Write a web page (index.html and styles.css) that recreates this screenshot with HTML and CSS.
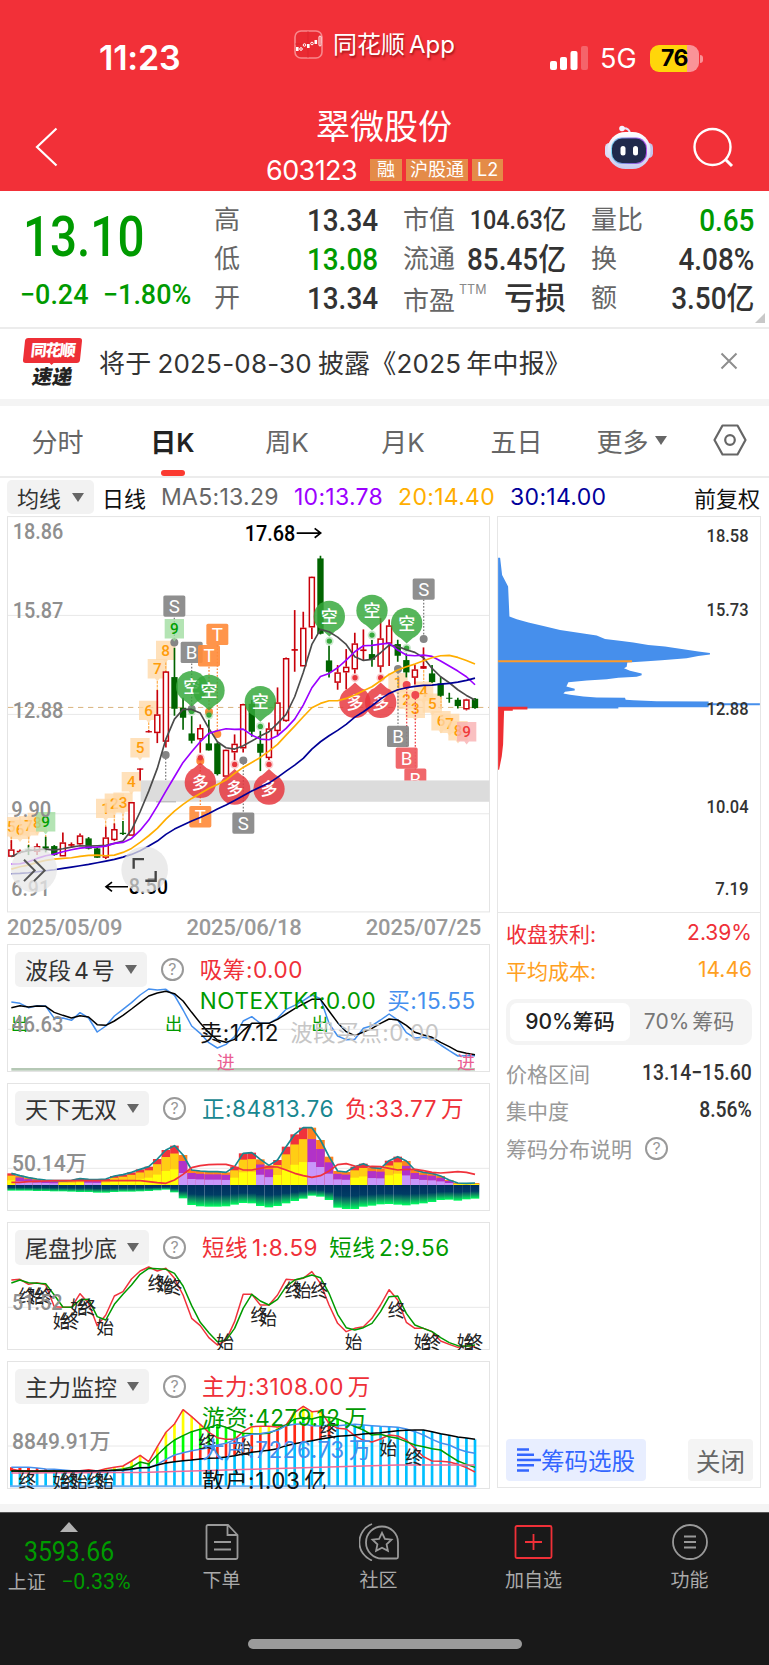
FILE: index.html
```html
<!DOCTYPE html>
<html lang="zh-CN">

<head>
    <meta charset="UTF-8">
    <meta name="viewport" content="width=device-width, initial-scale=1.0">
    <title>翠微股份 603123</title>
    <link rel="stylesheet" href="styles.css">
</head>

<body>
    <!-- 顶部 -->
    <header class="header">
        <div class="status">
            <span class="time">11:23</span>
            <div class="brand">
                <svg width="29" height="29" viewBox="0 0 29 29">
                    <rect x="1" y="1" width="27" height="27" rx="6" fill="#ea2a32" stroke="#f8888c" stroke-width="1.6" />
                    <path d="M1 14h27M14 1v27" stroke="#d82029" stroke-width=".6" />
                    <g fill="#fff">
                        <rect x="2" y="17" width="2.6" height="4" />
                        <rect x="13" y="14" width="2.6" height="4" />
                        <rect x="20.5" y="10" width="2.6" height="4" />
                    </g>
                    <g fill="none" stroke="#fff">
                        <circle cx="7" cy="19" r="1.3" />
                        <circle cx="10.5" cy="15" r="1.3" />
                        <circle cx="18" cy="13.5" r="1.3" />
                        <rect x="25" y="6" width="2" height="10" rx="1" />
                    </g>
                </svg>
                <span>同花顺<i>App</i></span>
            </div>
            <div class="signal">
                <svg width="39" height="26" viewBox="0 0 39 26" fill="#fff">
                    <rect x="0" y="16" width="7" height="9" rx="2" />
                    <rect x="10" y="12" width="7" height="13" rx="2" />
                    <rect x="20.5" y="6" width="7" height="19" rx="2" />
                    <rect x="31" y="1" width="7" height="24" rx="2" opacity=".25" />
                </svg>
                <span class="net">5G</span>
                <span class="battery">76</span>
            </div>
        </div>
        <div class="title-bar">
            <svg class="back" width="24" height="40" viewBox="0 0 24 40">
                <path d="M21.500 1.500L2 20l19.500 18.500" fill="none" stroke="#fff" stroke-width="2.200" />
            </svg>
            <div class="name">
                <h1>翠微股份</h1>
                <p><b>603123</b><span>融</span><span>沪股通</span><span>L2</span></p>
            </div>
            <div class="tools">
                <svg width="48" height="44" viewBox="0 0 48 44">
                    <defs>
                        <linearGradient id="head" x1="0" y1="0" x2="0" y2="1">
                            <stop offset="0" stop-color="#fff" />
                            <stop offset="1" stop-color="#c9cbf0" />
                        </linearGradient>
                        <linearGradient id="face" x1="0" y1="0" x2="1" y2="0">
                            <stop offset="0" stop-color="#7fd8f4" />
                            <stop offset=".5" stop-color="#7c6cd8" />
                            <stop offset="1" stop-color="#b04fe8" />
                        </linearGradient>
                    </defs>
                    <path d="M17 3.500q7-1 8 5" fill="none" stroke="#e6e6fa" stroke-width="2" />
                    <circle cx="17" cy="3.500" r="2.800" fill="#f4f2ff" />
                    <rect x="0" y="18" width="9" height="15" rx="4.500" fill="#dcdcf6" />
                    <rect x="39" y="18" width="9" height="15" rx="4.500" fill="#c4c4ea" />
                    <rect x="2.500" y="7" width="43" height="37" rx="18" fill="url(#head)" />
                    <rect x="6" y="12.500" width="36" height="26.500" rx="11" fill="url(#face)" />
                    <rect x="7" y="13.500" width="34" height="24.500" rx="10" fill="#202a4c" />
                    <rect x="15.500" y="21" width="5" height="9.500" rx="2.500" fill="#fff" />
                    <rect x="28" y="21" width="5" height="9.500" rx="2.500" fill="#fff" />
                </svg>
                <svg width="42" height="42" viewBox="0 0 42 42" fill="none" stroke="#fff" stroke-width="2.400">
                    <circle cx="19.500" cy="20" r="18" />
                    <path d="M32 32l7 7" stroke-width="3" />
                </svg>
            </div>
        </div>
    </header>

    <!-- 报价 -->
    <section class="quote">
        <div class="price">
            <p class="now"><span class="din">13.10</span></p>
            <p class="diff"><span class="din">−0.24</span><span class="din">−1.80%</span></p>
        </div>
        <dl class="col">
            <div><dt>高</dt><dd><span class="din">13.34</span></dd></div>
            <div><dt>低</dt><dd class="green"><span class="din">13.08</span></dd></div>
            <div><dt>开</dt><dd><span class="din">13.34</span></dd></div>
        </dl>
        <dl class="col">
            <div><dt>市值</dt><dd class="small"><span class="din">104.63亿</span></dd></div>
            <div><dt>流通</dt><dd><span class="din">85.45亿</span></dd></div>
            <div><dt class="pe">市盈<sup>TTM</sup></dt><dd class="cn">亏损</dd></div>
        </dl>
        <dl class="col">
            <div><dt>量比</dt><dd class="green"><span class="din">0.65</span></dd></div>
            <div><dt>换</dt><dd><span class="din">4.08%</span></dd></div>
            <div><dt>额</dt><dd><span class="din">3.50亿</span></dd></div>
        </dl>
        <i class="corner"></i>
    </section>

    <section class="notice">
        <div class="logo">
            <b>同花顺</b>
            <em>速递</em>
        </div>
        <p>将于<i>2025-08-30</i>披露《2025<u>年中报》</u></p>
        <svg width="18" height="18" viewBox="0 0 18 18" stroke="#8e8e8e" stroke-width="2"><path d="M1.500 1.500l15 15M16.500 1.500l-15 15" /></svg>
    </section>

    <!-- 周期切换 -->
    <nav class="tabs">
        <span>分时</span>
        <span class="active">日K</span>
        <span>周K</span>
        <span>月K</span>
        <span>五日</span>
        <span>更多<i class="arrow"></i></span>
        <span>
            <svg width="34" height="32" viewBox="0 0 34 32" fill="none" stroke="#666" stroke-width="2.200">
                <path d="M9.500 1.500h15L32.500 16l-8 14.500h-15L1.500 16z" stroke-linejoin="round" />
                <circle cx="17" cy="16" r="4.800" />
            </svg>
        </span>
    </nav>

    <div class="ma">
        <span class="select">均线<i class="arrow"></i></span>
        <span class="day">日线</span>
        <span class="ma5">MA5:13.29</span>
        <span class="ma10">10:13.78</span>
        <span class="ma20">20:14.40</span>
        <span class="ma30">30:14.00</span>
        <span class="right">前复权</span>
    </div>

    <main class="charts">
        <div class="left">
            <svg class="price-chart" id="priceChart" viewBox="21 3 1449 1189"></svg>
            <p class="dates"><span>2025/05/09</span><span>2025/06/18</span><span>2025/07/25</span></p>

            <div class="panel">
                <svg id="waveChart" viewBox="21 12 1449 384"></svg>
                <div class="legend wave">
                    <span class="select">波段 4 号<i class="arrow"></i></span>
                    <span class="help">?</span>
                    <div class="values">
                        <span class="red">吸筹:0.00</span><br>
                        <span class="green">NOTEXTK1:0.00</span><span class="blue">买:15.55</span><br>
                        <span class="black">卖:17.12</span><span class="grey">波段买点:0.00</span>
                    </div>
                </div>
            </div>
            <div class="panel">
                <svg id="flowChart" viewBox="21 429 1449 384"></svg>
                <div class="legend">
                    <span class="select">天下无双<i class="arrow"></i></span>
                    <span class="help">?</span>
                    <div class="values">
                        <span class="teal">正:84813.76</span><span class="red">负:33.77 万</span>
                    </div>
                </div>
            </div>
            <div class="panel">
                <svg id="shortChart" viewBox="21 21 1449 384"></svg>
                <div class="legend">
                    <span class="select">尾盘抄底<i class="arrow"></i></span>
                    <span class="help">?</span>
                    <div class="values">
                        <span class="red">短线 1:8.59</span><span class="green">短线 2:9.56</span>
                    </div>
                </div>
            </div>
            <div class="panel">
                <svg id="mainChart" viewBox="21 438 1449 384"></svg>
                <div class="legend">
                    <span class="select">主力监控<i class="arrow"></i></span>
                    <span class="help">?</span>
                    <div class="values">
                        <span class="red">主力:3108.00 万</span><br>
                        <span class="green">游资:4279.12 万</span><br>
                        <span class="blue">大户:7226.73 万</span><br>
                        <span class="black">散户:1.03 亿</span>
                    </div>
                </div>
            </div>
        </div>

        <!-- 筹码分布 -->
        <aside class="chips">
            <svg id="chipChart" viewBox="24 6 786 1186"></svg>
            <div class="info">
                <p class="red"><span>收盘获利:</span><span>2.39%</span></p>
                <p class="orange"><span>平均成本:</span><span>14.46</span></p>
                <div class="switch"><b>90%筹码</b><span>70% 筹码</span></div>
                <p><span>价格区间</span><b class="din">13.14−15.60</b></p>
                <p><span>集中度</span><b class="din">8.56%</b></p>
                <p class="explain"><span>筹码分布说明</span><span class="help">?</span></p>
            </div>
            <div class="buttons">
                <span class="pick">
                    <svg width="24" height="24" viewBox="0 0 24 24" stroke="#3366ff" stroke-width="2.600"><path d="M0 1.500h12M0 6.700h17M0 12h24M0 17.300h17M0 22.500h12" /></svg>筹码选股
                </span>
                <span class="close">关闭</span>
            </div>
        </aside>
    </main>

    <!-- 底部 -->
    <footer class="footer">
        <div class="bar">
            <div class="index">
                <i></i>
                <b><span class="din">3593.66</span></b>
                <p>上证<span class="din">−0.33%</span></p>
            </div>
            <div class="item">
                <svg width="34" height="37" viewBox="0 0 34 37">
                    <path d="M3 1.500h20l9.500 10V34q0 1.500-1.500 1.500H3Q1.500 35.500 1.500 34V3Q1.500 1.500 3 1.500zM22.500 1.500V11.500h10M9 18.500h17M9 26h17" />
                </svg>
                <span>下单</span>
            </div>
            <div class="item">
                <svg width="40" height="38" viewBox="0 0 40 38">
                    <path d="M23 3.500A15.500 15.500 0 0 0 23 35.500H37.500q1.500 0 1.500-1.500V19.500A16 16 0 0 0 23 3.500zM13 1A19.500 19.500 0 0 0 13 37.500M23 9.800l2.900 6.100 6.600.8-4.900 4.600 1.300 6.600L23 24.700l-5.900 3.200 1.300-6.600-4.900-4.600 6.600-.8z" />
                </svg>
                <span>社区</span>
            </div>
            <div class="item">
                <svg class="add" width="39" height="35" viewBox="0 0 39 35">
                    <path d="M3 1.500h33q1.500 0 1.500 1.500v29q0 1.500-1.500 1.500H3Q1.500 33.500 1.500 32V3Q1.500 1.500 3 1.500zM19.500 9.500v16M11 17.500h17" />
                </svg>
                <span>加自选</span>
            </div>
            <div class="item">
                <svg width="36" height="36" viewBox="0 0 36 36">
                    <circle cx="18" cy="18" r="17" />
                    <path d="M12 12.500h12M12 18h12M12 23.500h12" />
                </svg>
                <span>功能</span>
            </div>
        </div>
        <i class="home"></i>
    </footer>

    <script src="charts.js"></script>
</body>

</html>
```
FILE: styles.css
```css
* {
    padding: 0;
    margin: 0;
    box-sizing: border-box;
}

body {
    width: 769px;
    background: #fff;
    font-family: Inter, "Noto Sans CJK SC", sans-serif;
    color: #333;
}

i, em, u {
    font-style: normal;
    text-decoration: none;
}

svg {
    display: block;
    flex: none;
}

svg text {
    font-family: Roboto, "Noto Sans CJK SC", sans-serif;
}

.din {
    display: inline-block;
    font-family: Roboto, "Noto Sans CJK SC", sans-serif;
    transform: scaleX(.9);
    transform-origin: right center;
}

.red { color: #ef3038; }
.green { color: #009a00; }
.blue { color: #448fee; }
.black { color: #111; }
.grey { color: #c6c6c6; }
.teal { color: #188790; }
.orange { color: #ffa01e; }

/* 顶部 */
.header {
    height: 191px;
    background: #f23038;
    color: #fff;
}

.status {
    height: 100px;
    padding: 0 65px 0 99px;
    display: grid;
    grid-template-columns: 195px 1fr 154px;
}

.time {
    padding-top: 38px;
    font-size: 34px;
    line-height: 40px;
    font-weight: 600;
    letter-spacing: -.2px;
}

.brand {
    display: flex;
    gap: 10px;
    height: 29px;
    margin-top: 30px;
    align-items: center;
    font-size: 24px;
    line-height: 29px;
    text-shadow: 1px 2px 2px rgba(90, 0, 0, .5);
    white-space: nowrap;
}

.brand i {
    margin-left: 4px;
}

.signal {
    display: flex;
    align-items: center;
    height: 28px;
    margin-top: 44px;
}

.net {
    width: 61px;
    padding-left: 11px;
    font-size: 27px;
}

.battery {
    position: relative;
    width: 49px;
    height: 27px;
    border-radius: 9px;
    background: linear-gradient(90deg, #ffd60a 76%, #fa9397 76%);
    color: #000;
    font-size: 23px;
    line-height: 27px;
    font-weight: 700;
    text-align: center;
    letter-spacing: -.5px;
}

.battery::after {
    content: "";
    position: absolute;
    right: -4px;
    top: 10px;
    width: 3px;
    height: 8px;
    border-radius: 0 4px 4px 0;
    background: #fa9397;
}

.title-bar {
    height: 91px;
    padding: 5px 34px 0 35px;
    display: grid;
    grid-template-columns: 1fr 242px 1fr;
}

.back {
    margin-top: 22px;
}

.name h1 {
    padding-right: 2px;
    text-align: center;
    font-size: 34px;
    line-height: 44px;
    font-weight: 400;
}

.name p {
    display: flex;
    align-items: center;
    height: 24px;
    margin-top: 9px;
    margin-left: 2px;
    gap: 4px;
}

.name b {
    width: 100px;
    font-size: 27px;
    font-weight: 400;
    letter-spacing: -.6px;
}

.name p span {
    padding: 0 7px;
    background: #e48b48;
    font-size: 18px;
    line-height: 22px;
}

.name p span:nth-child(3) { padding: 0 4px; }
.name p span:nth-child(4) { padding: 0 5px; }

.tools {
    display: flex;
    justify-content: flex-end;
    align-items: flex-start;
    gap: 40px;
    padding-top: 20px;
}

.tools svg + svg {
    margin-top: 2px;
}

/* 报价 */
.quote {
    position: relative;
    height: 138px;
    padding: 9px 15px 0 0;
    display: grid;
    grid-template-columns: 189px 164px 163px 163px;
    column-gap: 25px;
    border-bottom: 2px solid #ececec;
}

.price {
    color: #009a00;
    white-space: nowrap;
}

.now {
    padding: 1px 0 0 23px;
    font-size: 56px;
    line-height: 70px;
    font-weight: 500;
}

.now .din {
    transform: scaleX(.85);
    transform-origin: left;
}

.diff {
    display: flex;
    padding-left: 20px;
    font-size: 28px;
    line-height: 46px;
    font-weight: 500;
}

.diff .din {
    width: 83px;
    transform: scaleX(.96);
    transform-origin: left;
}

.col div {
    display: flex;
    justify-content: space-between;
    align-items: center;
    height: 39px;
    white-space: nowrap;
}

.col dt {
    color: #666;
    font-size: 26px;
    line-height: 39px;
}

.col .pe {
    padding-top: 5px;
}

.col dt sup {
    display: inline-block;
    margin-left: 4px;
    color: #888;
    font-size: 12.500px;
    line-height: 12px;
    vertical-align: 16px;
}

.col dd {
    font-size: 31px;
    line-height: 39px;
    font-weight: 500;
}

.col .small {
    font-size: 26px;
}

.col .cn {
    font-size: 31px;
}

.corner {
    position: absolute;
    right: 4px;
    bottom: 4px;
    border: solid transparent;
    border-width: 0 0 10px 10px;
    border-bottom-color: #c8c8c8;
}

.notice {
    display: flex;
    align-items: center;
    height: 77px;
    padding: 0 31px 7px 24px;
    border-bottom: 7px solid #f4f4f4;
    font-size: 26px;
}

.logo {
    width: 57px;
    height: 50px;
    margin-right: 18px;
    padding-top: 2px;
    text-align: center;
}

.logo b {
    display: block;
    height: 25px;
    background: #ee2f36;
    border-radius: 3px;
    color: #fff;
    font-size: 16px;
    line-height: 24px;
    font-weight: 900;
    letter-spacing: -1.500px;
    transform: skewX(-6deg);
}

.logo b::after {
    content: "";
    display: block;
    width: 0;
    margin: -1px auto 0;
    border: 4px solid transparent;
    border-top-color: #ee2f36;
}

.logo em {
    display: block;
    color: #222;
    font-size: 20px;
    line-height: 28px;
    font-weight: 900;
    transform: skewX(-10deg);
}

.notice p {
    flex: 1;
    padding-top: 2px;
    white-space: nowrap;
    letter-spacing: .2px;
}

.notice p i {
    margin: 0 6px;
}

.notice u {
    margin-left: 5px;
}

.arrow {
    display: inline-block;
    border: 6px solid transparent;
    border-top: 9px solid #666;
    border-bottom: 0;
}

/* 周期切换 */
.tabs {
    display: grid;
    grid-template-columns: 115px 115px 114px 118px 109px 121px 75px;
    height: 72px;
    border-bottom: 2px solid #ececec;
    color: #666;
    font-size: 26px;
}

.tabs span {
    display: flex;
    align-items: center;
    justify-content: center;
    position: relative;
    padding-bottom: 2px;
}

.tabs .arrow {
    margin-left: 6px;
}

.tabs .active {
    color: #222;
    font-weight: 600;
}

.tabs .active::after {
    content: "";
    position: absolute;
    bottom: 0;
    width: 24px;
    height: 6px;
    border-radius: 3px;
    background: #fb3a30;
}

.select {
    display: inline-flex;
    align-items: center;
    background: #f2f2f2;
    border-radius: 5px;
}

.ma {
    display: flex;
    align-items: center;
    height: 38px;
    padding: 0 9px 0 7px;
    font-size: 22px;
    white-space: nowrap;
}

.ma .select {
    width: 87px;
    height: 34px;
    padding-left: 10px;
    margin-right: 8px;
}

.ma .arrow {
    margin-left: 11px;
}

.ma span + span {
    margin-right: 15px;
}

.ma .day { color: #111; }
.ma .ma5 { color: #666; }
.ma .ma10 { color: #9b00ff; }
.ma .ma20 { color: #ffae00; }
.ma .ma30 { color: #00009b; }

.ma .ma5,
.ma .ma10,
.ma .ma20,
.ma .ma30 {
    font-size: 23px;
    letter-spacing: .3px;
}

.ma .right {
    margin: 0 0 0 auto;
    color: #111;
}

.charts {
    display: flex;
    gap: 7px;
    height: 996px;
    padding: 0 8px 0 7px;
    border-bottom: 8px solid #f4f4f4;
}

.left {
    width: 483px;
}

.price-chart {
    width: 483px;
    height: 396.500px;
}

.dates {
    display: flex;
    justify-content: space-between;
    height: 31px;
    padding-right: 9px;
    color: #999;
    font: 500 22px/29px Roboto, sans-serif;
    letter-spacing: -.2px;
}

.panel {
    display: grid;
    height: 128px;
    margin-bottom: 11px;
    overflow: hidden;
}

.panel > svg,
.legend {
    grid-area: 1 / 1;
    width: 483px;
    height: 128px;
}

.legend {
    display: flex;
    padding: 8px 0 0 8px;
    overflow: hidden;
    z-index: 1;
}

.legend .select {
    height: 35px;
    padding: 0 10px;
    font-size: 23px;
    white-space: nowrap;
}

.wave .select {
    word-spacing: -3.500px;
}

.legend .arrow {
    margin-left: 10px;
}

.help {
    width: 23px;
    height: 23px;
    border: 2px solid #999;
    border-radius: 50%;
    color: #999;
    font-size: 16px;
    line-height: 19px;
    text-align: center;
}

.legend .help {
    margin: 6px 16px 0 14px;
}

.values {
    font-size: 22.500px;
    line-height: 31.500px;
    padding-top: 2px;
    white-space: nowrap;
    letter-spacing: .55px;
    word-spacing: -3px;
}

.values span {
    margin-right: 11px;
}

/* 筹码分布 */
.chips {
    display: flex;
    flex-direction: column;
    width: 264px;
    height: 972px;
    border: 1px solid #e6e6e6;
}

.chips > svg {
    width: 262px;
    height: 395px;
}

.info {
    flex: 1;
    padding: 1px 8px 0 8px;
    border-top: 1px solid #e6e6e6;
    color: #999;
    font-size: 21px;
}

.info p {
    display: flex;
    justify-content: space-between;
    align-items: center;
    height: 37px;
}

.info .red { color: #ef3038; }
.info .orange { color: #ffa01e; }

.info .din {
    color: #333;
    font-weight: 500;
    font-size: 22px;
    transform: scaleX(.88);
}

.switch {
    display: flex;
    height: 46px;
    margin: 11px 0 9px;
    padding: 4px;
    border-radius: 10px;
    background: #f4f4f4;
    line-height: 37px;
    text-align: center;
    color: #777;
    word-spacing: -3px;
}

.switch b {
    width: 120px;
    border-radius: 7px;
    background: #fff;
    color: #222;
    font-weight: 500;
}

.switch span {
    flex: 1;
}

.info .explain {
    justify-content: flex-start;
    height: 40px;
}

.explain .help {
    margin-left: 13px;
}

.buttons {
    display: flex;
    justify-content: space-between;
    padding: 0 7px 6px 8px;
}

.buttons span {
    display: flex;
    align-items: center;
    height: 42px;
    padding: 0 11px;
    border-radius: 4px;
    font-size: 23.500px;
}

.pick {
    background: #e8eeff;
    color: #3366ff;
}

.close {
    background: #f4f4f4;
    color: #666;
}

.buttons .close {
    padding: 0 8px;
    font-size: 24.500px;
}

/* 底部 */
.footer {
    height: 153px;
    background: #191919;
    border-top: 1px solid #555;
    color: #aaa;
}

.bar {
    display: grid;
    grid-template-columns: 141px 161px 153px 157px 155px;
    height: 126px;
}

.index {
    display: flex;
    flex-direction: column;
    align-items: center;
    padding-top: 9px;
    padding-right: 3px;
}

.index i {
    border: 9px solid transparent;
    border-top: 0;
    border-bottom: 10px solid #b2b2b2;
}

.index b {
    margin-top: 6px;
    color: #009a00;
    font-size: 27px;
    line-height: 28px;
    font-weight: 400;
}

.index b .din {
    transform: scaleX(.92);
    transform-origin: center;
}

.index p {
    font-size: 19px;
    line-height: 32px;
    white-space: nowrap;
}

.index p .din {
    margin-left: 13px;
    color: #009a00;
    font-size: 22px;
    transform: scaleX(.97);
}

.item {
    display: flex;
    flex-direction: column;
    align-items: center;
    padding-top: 10px;
    font-size: 19px;
}

.item svg {
    height: 38px;
    fill: none;
    stroke: #999;
    stroke-width: 1.800;
}

.item .add {
    stroke: #ef3038;
}

.item span {
    margin-top: 4px;
}

.home {
    display: block;
    width: 274px;
    height: 10px;
    margin: 0 auto;
    border-radius: 5px;
    background: #9b9b9b;
}
```
FILE: charts.js
```js
var STEP = 25.76;
var X0 = 34;

function px(i) {
    return +(X0 + i * STEP).toFixed(1);
}

function text(x, y, str, size, color, len, extra) {
    return '<text x="' + x + '" y="' + y + '" font-size="' + size + '" fill="' + color + '"' +
        (len ? ' textLength="' + len + '" lengthAdjust="spacingAndGlyphs"' : '') + ' ' + (extra || '') + '>' + str + '</text>';
}

function mid(x, y, str, size, color, extra) {
    return text(x, y + size * 0.36, str, size, color, 0, 'text-anchor="middle" ' + (extra || ''));
}

//坐标轴数字
function axis(x, y, str, len) {
    return text(x, y, str, 64, '#8f8f8f', len, 'font-weight="500"');
}

function rect(x, y, w, h, fill, extra) {
    return '<rect x="' + x + '" y="' + y + '" width="' + w + '" height="' + h + '" fill="' + fill + '" ' + (extra || '') + '/>';
}

function seg(x1, y1, x2, y2, color, w, extra) {
    return '<line x1="' + x1 + '" y1="' + y1 + '" x2="' + x2 + '" y2="' + y2 + '" stroke="' + color + '" stroke-width="' + w + '" ' + (extra || '') + '/>';
}

function line(arr, color, w) {
    var pts = [];
    for (var i = 0; i < arr.length; i++) {
        pts.push(px(i) + ',' + arr[i]);
    }
    return '<polyline points="' + pts.join(' ') + '" fill="none" stroke="' + color + '" stroke-width="' + (w || 5) + '" stroke-linejoin="round"/>';
}

//边框和横线
function frame(y, h, grids) {
    var s = rect(22.5, y + 1.5, 1446, h - 3, '#fff', 'stroke="#e4e4e4" stroke-width="3"');
    for (var i = 0; i < grids.length; i++) {
        s += seg(24, grids[i], 1467, grids[i], '#e8e8e8', 3);
    }
    return s;
}

function show(id, s) {
    document.getElementById(id).innerHTML = s;
}

//1.K线：类型，最高，实体上，实体下，最低
var candles = [
    ['r', 975, 1003, 1025, 1025], ['f', 1003, 1007, 1012, 1016], ['g', 990, 1003, 1007, 1020], ['r', 985, 993, 1010, 1020],
    ['g', 965, 994, 1000, 1012], ['g', 990, 993, 1020, 1022], ['r', 952, 982, 1024, 1024], ['f', 982, 987, 992, 998],
    ['r', 955, 961, 988, 992], ['g', 966, 970, 1001, 1003], ['g', 998, 1000, 1028, 1028], ['r', 935, 967, 1028, 1032],
    ['r', 925, 942, 975, 978], ['g', 918, 953, 957, 960], ['r', 861, 861, 962, 962], ['f', 760, 760, 764, 796],
    ['f', 645, 648, 652, 652], ['r', 525, 598, 654, 684], ['r', 468, 469, 680, 697], ['g', 398, 486, 581, 602],
    ['g', 548, 578, 608, 644], ['g', 603, 655, 677, 685], ['r', 628, 639, 673, 713], ['g', 614, 685, 706, 706],
    ['g', 682, 685, 777, 781], ['r', 703, 704, 785, 785], ['r', 658, 686, 712, 735], ['r', 566, 567, 700, 712],
    ['g', 555, 566, 650, 665], ['g', 648, 686, 713, 768], ['r', 622, 640, 729, 735], ['r', 517, 562, 648, 660],
    ['r', 427, 429, 618, 620], ['f', 285, 402, 407, 470], ['r', 290, 338, 454, 454], ['r', 184, 185, 337, 372],
    ['g', 122, 130, 356, 358], ['g', 392, 436, 470, 487], ['r', 450, 472, 503, 524], ['r', 402, 455, 472, 522],
    ['r', 353, 385, 463, 475], ['f', 343, 403, 408, 437], ['g', 375, 417, 434, 455], ['r', 309, 370, 455, 472],
    ['r', 313, 331, 386, 453], ['g', 374, 387, 422, 440], ['g', 415, 435, 472, 487], ['r', 448, 463, 488, 508],
    ['f', 397, 453, 461, 461], ['g', 450, 475, 501, 503], ['g', 485, 505, 542, 545], ['g', 533, 548, 551, 563],
    ['g', 548, 554, 573, 580], ['r', 551, 553, 583, 586], ['g', 549, 551, 579, 581]
];
var ma5 = [1025, 1012, 1007, 1004, 1002, 1005, 1001, 996, 992, 993, 992, 991, 985, 978, 945, 890, 828, 760, 672, 612, 583, 583, 594, 640, 680, 698, 702, 692, 678, 663, 650, 625, 598, 545, 472, 388, 343, 350, 366, 388, 425, 436, 433, 413, 390, 394, 404, 412, 428, 460, 485, 503, 524, 541, 555];
var ma10 = [1047, 1046, 1040, 1030, 1022, 1017, 1010, 1004, 999, 997, 996, 993, 985, 982, 970, 946, 915, 873, 828, 785, 742, 710, 680, 655, 647, 641, 643, 642, 660, 672, 674, 662, 640, 612, 570, 518, 484, 475, 458, 435, 410, 392, 391, 387, 384, 405, 420, 422, 420, 424, 438, 453, 468, 485, 509];
var ma20 = [1062, 1055, 1050, 1042, 1036, 1032, 1030, 1028, 1024, 1021, 1020, 1022, 1020, 1012, 1000, 982, 962, 940, 912, 888, 868, 850, 835, 820, 808, 795, 775, 757, 742, 727, 708, 688, 660, 633, 605, 578, 565, 557, 557, 550, 540, 527, 515, 497, 478, 465, 455, 447, 437, 428, 422, 421, 427, 436, 447];
var ma30 = [1076, 1075, 1073, 1070, 1067, 1064, 1060, 1056, 1052, 1048, 1043, 1038, 1033, 1026, 1018, 1007, 993, 978, 958, 942, 930, 918, 907, 895, 882, 870, 856, 842, 828, 816, 804, 787, 768, 750, 730, 702, 680, 662, 646, 628, 606, 590, 572, 552, 535, 524, 518, 514, 511, 510, 507, 505, 501, 496, 489];

function numTag(x, y, n, kind) {
    var bg = { o: '#ffd9a8', g: '#9fdc9f', r: '#f9aeb0' }[kind];
    var fg = { o: '#ff9d0a', g: '#00a000', r: '#f03a3a' }[kind];
    return '<path d="M' + (x - 29) + ' ' + (y - 29) + 'h58v58h-22l-7 9-7-9h-22z" fill="' + bg + '" opacity=".78"/>' + mid(x, y, n, 46, fg, 'font-weight="500"');
}

function boxTag(x, y, ch, color) {
    return rect(x - 33, y - 32, 66, 64, color, 'rx="5" opacity=".92"') + mid(x, y, ch, 56, '#fff');
}

//空在上方，多在下方
function bubble(x, y, ch) {
    var up = ch == '空' ? 1 : -1;
    var c = up == 1 ? '#35a83b' : '#e8363d';
    return '<g opacity=".83"><circle cx="' + x + '" cy="' + y + '" r="47" fill="' + c + '"/>' +
        '<path d="M' + (x - 20) + ' ' + (y + up * 42) + 'L' + x + ' ' + (y + up * 60) + 'L' + (x + 20) + ' ' + (y + up * 42) + '" fill="' + c + '"/></g>' +
        '<circle cx="' + x + '" cy="' + (y + up * 74) + '" r="13" fill="' + c + '" opacity=".25"/>' +
        '<circle cx="' + x + '" cy="' + (y + up * 74) + '" r="8" fill="' + c + '"/>' + mid(x, y, ch, 51, '#fff', 'font-weight="500"');
}

function dash(x, y1, y2, color) {
    return seg(x, y1, x, y2, color, 4, 'stroke-dasharray="5 5"');
}

function dot(x, y, color) {
    return '<circle cx="' + x + '" cy="' + y + '" r="12" fill="' + color + '"/>';
}

function drawPrice() {
    var s = frame(3, 1189, [301, 598, 896]);
    var g = '#858585', o = '#ff8c3c';
    s += rect(422, 796, 1046, 64, '#dcdcdc');
    s += seg(24, 577, 1467, 577, '#d9b27c', 3, 'stroke-dasharray="16 14"');

    var i;
    //神奇九转
    s += numTag(34, 935, 5, 'o') + numTag(60, 943, 6, 'o') + numTag(86, 932, 7, 'o') + numTag(112, 922, 8, 'o') + numTag(137, 920, 9, 'g');
    s += numTag(317, 880, 1, 'o') + numTag(343, 864, 2, 'o') + numTag(369, 861, 3, 'o') + numTag(394, 800, 4, 'o');
    s += numTag(420, 698, 5, 'o') + numTag(446, 586, 6, 'o') + numTag(472, 461, 7, 'o') + numTag(497, 406, 8, 'o');
    s += numTag(1194, 503, 1, 'o') + numTag(1220, 553, 2, 'o') + numTag(1246, 580, 3, 'o') + numTag(1271, 528, 4, 'o') + numTag(1297, 564, 5, 'o');
    s += numTag(1323, 617, 6, 'o') + numTag(1349, 625, 7, 'o') + numTag(1374, 647, 8, 'o') + numTag(1400, 650, 9, 'r');
    var stems = [[34, 965, 1000], [86, 965, 1000], [137, 960, 990], [317, 917, 940], [343, 900, 930], [369, 896, 920], [446, 622, 645], [472, 498, 528], [497, 442, 468], [1271, 465, 500], [1323, 545, 580]];
    for (i = 0; i < stems.length; i++) {
        s += seg(stems[i][0], stems[i][1], stems[i][0], stems[i][2], '#ffb55c', 4, 'stroke-dasharray="8 3"');
    }

    //BS点连线
    s += dash(523, 308, 380, g) + dash(575, 445, 580, g) + dash(497, 720, 795, g) + seg(468, 860, 528, 860, '#bbb', 4);
    s += dash(627, 455, 590, o) + dash(652, 390, 655, o) + dash(601, 735, 870, o) + dash(730, 735, 895, g);
    s += dash(1194, 462, 635, g) + dash(1271, 253, 372, g) + dash(1220, 510, 700, '#ef4a50') + dash(1246, 540, 765, '#ef4a50');

    for (i = 0; i < candles.length; i++) {
        var c = candles[i], x = px(i), color = c[0] == 'g' ? '#006400' : '#c8000a';
        if (c[0] == 'r') {
            s += seg(x, c[1], x, c[2], color, 5) + seg(x, c[3], x, c[4], color, 5);
            s += rect(x - 7.5, c[2] + 2, 15, c[3] - c[2] - 4, '#fff', 'stroke="' + color + '" stroke-width="4.5"');
        } else {
            s += seg(x, c[1], x, c[4], color, 5) + rect(x - 9.5, c[2], 19, c[3] - c[2], color);
        }
    }

    s += dot(523, 382, g) + dot(497, 720, g) + dot(575, 582, g) + dot(730, 736, g) + dot(1194, 462, g) + dot(1271, 372, g);
    s += dot(652, 657, o) + dot(627, 590, o) + dot(601, 738, o) + dot(1220, 510, '#ef4a50') + dot(1246, 540, '#ef4a50');
    s += numTag(523, 341, 9, 'g');
    s += boxTag(523, 273, 'S', g) + boxTag(575, 412, 'B', g) + boxTag(652, 358, 'T', o) + boxTag(627, 422, 'T', o);
    s += boxTag(601, 905, 'T', o) + boxTag(730, 924, 'S', g) + boxTag(1271, 222, 'S', g) + boxTag(1194, 664, 'B', g) + boxTag(1220, 729, 'B', '#ef5a5e');
    s += '<clipPath id="cut"><rect x="1200" y="740" width="100" height="56"/></clipPath><g clip-path="url(#cut)">' + boxTag(1246, 792, 'B', '#ef5a5e') + '</g>';
    s += bubble(575, 515, '空') + bubble(627, 526, '空') + bubble(781, 560, '空') + bubble(988, 304, '空') + bubble(1116, 286, '空') + bubble(1220, 325, '空');
    s += bubble(601, 802, '多') + bubble(704, 822, '多') + bubble(807, 822, '多') + bubble(1065, 562, '多') + bubble(1142, 562, '多');

    s += line(ma5, '#4b4b4b') + line(ma10, '#9b00ff') + line(ma20, '#ffae00') + line(ma30, '#000096');

    s += axis(38, 72, '18.86', 152) + axis(38, 310, '15.87', 152) + axis(38, 608, '12.88', 152);
    s += axis(34, 905, '9.90', 120) + axis(34, 1144, '6.91', 116);
    s += text(734, 78, '17.68', 64, '#000', 152, 'font-weight="500"');
    s += '<path d="M890 54h70M944 40l18 14-18 14M384 1115h-64M336 1101l-18 14 18 14" fill="none" stroke="#000" stroke-width="5"/>';
    s += text(386, 1138, '8.50', 64, '#000', 118, 'font-weight="500"');
    s += '<circle cx="102" cy="1063" r="69" fill="#e8e8e8" opacity=".78"/><circle cx="434" cy="1064" r="70" fill="#e4e4e4" opacity=".75"/>';
    s += '<path d="M72 1034l32 32-32 32M102 1034l32 32-32 32" fill="none" stroke="#555" stroke-width="6"/>';
    s += '<path d="M401 1061v-29h31M467 1068v29h-31" fill="none" stroke="#444" stroke-width="7"/>';
    show('priceChart', s);
}

//2.波段4号
function drawWave() {
    var s = frame(12, 384, [268]);
    s += rect(34, 384, 1391, 8, '#b5c8b5');
    s += line([186, 190, 203, 197, 198, 235, 234, 241, 218, 234, 276, 258, 228, 208, 188, 165, 147, 150, 148, 166, 210, 258, 280, 308, 324, 313, 290, 243, 230, 250, 250, 235, 208, 196, 182, 165, 176, 250, 288, 299, 298, 265, 257, 240, 222, 240, 278, 294, 292, 297, 315, 332, 348, 347, 347], '#448fee', 4.5);
    s += line([203, 197, 201, 198, 199, 217, 226, 234, 227, 231, 254, 256, 243, 226, 207, 187, 168, 159, 154, 161, 183, 217, 249, 278, 300, 307, 298, 272, 250, 250, 250, 238, 222, 206, 192, 178, 178, 213, 248, 275, 287, 276, 265, 250, 237, 240, 256, 277, 285, 292, 307, 320, 334, 340, 344], '#000', 4.5);
    s += mid(58, 250, '出', 52, '#009a00') + mid(521, 250, '出', 52, '#009a00') + mid(960, 250, '出', 52, '#009a00');
    s += mid(677, 367, '进', 54, '#ea5f93') + mid(1398, 367, '进', 54, '#ea5f93');
    s += axis(36, 276, '46.63', 154);
    show('waveChart', s);
}

//3.天下无双
function drawFlow() {
    var top = [700, 707, 713, 717, 720, 722, 722, 721, 716, 718, 719, 717, 708, 704, 697, 688, 680, 657, 630, 617, 645, 690, 693, 695, 695, 697, 680, 640, 638, 658, 676, 660, 620, 583, 563, 563, 600, 650, 693, 696, 680, 671, 683, 685, 662, 650, 663, 690, 697, 700, 708, 720, 729, 730, 729];
    var low = [752, 752, 752, 753, 753, 754, 754, 755, 756, 756, 758, 758, 756, 755, 755, 754, 753, 751, 749, 757, 775, 795, 799, 800, 800, 799, 794, 789, 790, 798, 802, 798, 790, 783, 776, 767, 770, 780, 803, 807, 807, 800, 797, 793, 792, 794, 796, 793, 790, 786, 780, 779, 782, 778, 776];
    var type = 'ypppppyyyppyyyyyyyyyppppppyyyppyyyypppppyyppyyppppppyyy';
    var s = '<defs><linearGradient id="sea" x1="0" y1="0" x2="0" y2="1"><stop offset="0" stop-color="#002d5f"/><stop offset=".45" stop-color="#003c64"/><stop offset=".7" stop-color="#0e8a62"/><stop offset="1" stop-color="#00ff5f"/></linearGradient></defs>';
    s += frame(429, 384, [685]);
    for (var i = 0; i < top.length; i++) {
        var x = i == 0 ? 22 : px(i) - 13, w = px(i) + 12.8 - x, h = 735 - top[i];
        var c = type.charAt(i) == 'y' ? ['#ffff0a', '#ffcd14', '#f0323c'] : ['#c896fa', '#b232c8', '#ff821e'];
        s += rect(x, top[i], w, h, c[2]) + rect(x, top[i] + h * 0.2, w, h * 0.8, c[1]) + rect(x, top[i] + h * 0.6, w, h * 0.4, c[0]);
        s += rect(x, 735, w, low[i] - 735, 'url(#sea)');
    }
    s += line(top, '#188790');
    s += line([727, 727, 725, 724, 723, 722, 722, 722, 722, 722, 722, 722, 722, 722, 722, 722, 725, 728, 730, 720, 703, 683, 677, 674, 673, 673, 680, 690, 690, 685, 680, 681, 690, 700, 707, 712, 707, 693, 674, 671, 678, 681, 679, 680, 685, 690, 688, 688, 692, 697, 699, 697, 695, 697, 703], '#f0323c');
    s += axis(36, 694, '50.14万', 224);
    show('flowChart', s);
}

//4.尾盘抄底
function drawShort() {
    var s = frame(21, 384, [277]);
    s += line([195, 193, 208, 203, 209, 275, 277, 277, 236, 265, 332, 300, 243, 230, 192, 168, 156, 168, 160, 190, 240, 310, 332, 368, 390, 376, 320, 238, 238, 270, 270, 240, 193, 195, 190, 170, 205, 270, 325, 350, 340, 335, 310, 270, 224, 255, 322, 340, 340, 350, 378, 388, 397, 393, 395], '#f0323c', 4.5);
    s += line([204, 195, 203, 205, 206, 240, 276, 277, 255, 253, 305, 315, 268, 238, 210, 178, 160, 161, 163, 175, 213, 272, 322, 353, 380, 376, 340, 280, 238, 258, 270, 253, 215, 195, 188, 180, 188, 235, 298, 338, 345, 338, 325, 290, 245, 243, 295, 330, 340, 350, 368, 383, 392, 394, 390], '#009a00', 4.5);
    var marks = [[82, 246, '终'], [108, 244, '始'], [134, 244, '终'], [185, 320, '始'], [211, 320, '终'], [237, 279, '始'], [262, 279, '终'], [315, 337, '始'], [470, 206, '终'], [495, 209, '始'], [520, 218, '终'], [675, 382, '始'], [778, 302, '终'], [804, 310, '始'], [881, 228, '终'], [908, 228, '始'], [958, 228, '终'], [1061, 382, '始'], [1190, 286, '终'], [1268, 382, '始'], [1296, 382, '终'], [1397, 382, '始'], [1423, 382, '终']];
    for (var i = 0; i < marks.length; i++) {
        s += mid(marks[i][0], marks[i][1], marks[i][2], 53, '#222');
    }
    s += axis(36, 284, '51.52', 152);
    show('shortChart', s);
}

//5.主力监控
function drawMain() {
    var red = [762, 767, 768, 768, 768, 769, 768, 768, 767, 764, 768, 761, 757, 753, 738, 721, 740, 695, 652, 627, 584, 605, 628, 652, 668, 673, 673, 650, 635, 634, 634, 636, 630, 592, 574, 590, 588, 625, 640, 642, 662, 676, 681, 672, 660, 663, 675, 700, 725, 738, 739, 741, 748, 758, 771];
    var green = [768, 769, 770, 770, 769, 769, 769, 769, 769, 769, 768, 767, 765, 762, 756, 741, 747, 720, 695, 675, 662, 650, 643, 638, 629, 637, 648, 655, 656, 656, 655, 643, 630, 612, 608, 612, 605, 607, 612, 622, 635, 645, 660, 658, 665, 670, 680, 690, 695, 701, 705, 722, 738, 748, 757];
    var blue = [757, 757, 757, 759, 762, 763, 765, 767, 768, 768, 768, 768, 767, 766, 764, 758, 757, 748, 733, 720, 713, 707, 703, 698, 690, 685, 674, 665, 658, 656, 652, 646, 632, 628, 626, 632, 633, 630, 632, 630, 628, 630, 632, 634, 635, 637, 642, 650, 660, 673, 684, 690, 702, 710, 715];
    var black = [768, 768, 768, 768, 768, 768, 768, 768, 768, 768, 768, 767, 766, 765, 762, 758, 758, 750, 744, 740, 737, 735, 732, 730, 729, 726, 722, 717, 712, 709, 706, 701, 692, 686, 681, 677, 672, 668, 664, 662, 660, 657, 655, 653, 650, 647, 646, 645, 645, 650, 656, 661, 666, 669, 673];
    var pink = [], s = frame(438, 384, [693]);
    for (var i = 0; i < 55; i++) {
        var x = px(i) - 4, t = 815;
        if (i < 3) {
            s += rect(x, 758, 8, 18, '#ff2814');
        }
        if (red[i] < green[i]) {
            s += rect(x, red[i], 8, green[i] - red[i], '#ffff00');
        }
        if (green[i] < blue[i]) {
            s += rect(x, green[i], 8, blue[i] - green[i], '#00ff00');
        }
        if (blue[i] < black[i]) {
            s += rect(x, blue[i], 8, black[i] - blue[i], i < 38 ? '#ff2814' : '#00c0ff');
        }
        s += rect(x, black[i], 8, t - black[i], '#00c0ff');
        pink.push(i < 16 ? 774 - i / 8 : Math.max(750, 772 - (i - 16) * 0.76));
    }
    s += line(red, '#f0323c', 4.5) + line(green, '#009a00', 4.5) + line(blue, '#448fee', 4.5) + line(black, '#000', 4.5) + line(pink, '#ef6a98', 4.5);
    s += seg(30, 814, 1427, 814, '#6eaef0', 6);
    var marks = [[82, 800, '终'], [185, 800, '始'], [211, 800, '终'], [237, 800, '始'], [288, 800, '终'], [315, 800, '始'], [622, 684, '终'], [727, 697, '始'], [985, 647, '终'], [1165, 702, '始'], [1242, 729, '终']];
    for (i = 0; i < marks.length; i++) {
        s += mid(marks[i][0], marks[i][1], marks[i][2], 53, '#222');
    }
    s += axis(36, 702, '8849.91万', 296);
    show('mainChart', s);
}

//6.筹码分布
function drawChips() {
    var s = '<polygon points="24,128 30,128 36,180 54,215 58,305 80,313 115,323 160,333 210,345 280,356 320,362 345,372 395,378 430,383 475,390 525,395 575,402 625,410 660,414 660,419 625,423 590,430 515,436 460,440 412,443 410,456 402,460 420,468 455,476 455,481 440,486 385,489 350,493 290,497 235,502 229,515 254,522 254,527 225,531 220,536 240,540 280,545 320,548 405,549 407,555 430,556 500,559 656,560 656,565 810,565 810,571 656,571 656,577 385,577 385,581 24,581" fill="#468fec"/>';
    s += seg(24, 439, 426, 439, '#ff9b28', 6);
    s += '<path d="M24 576h88v8H68v4H42l-1 30-2 70-4 36-8 41h-3z" fill="#ef2f33"/>';
    var labels = [[650, 82, '18.58', 126], [650, 302, '15.73', 126], [650, 600, '12.88', 126], [650, 896, '10.04', 126], [676, 1141, '7.19', 100]];
    for (var i = 0; i < labels.length; i++) {
        s += text(labels[i][0], labels[i][1], labels[i][2], 56, '#333', labels[i][3], 'font-weight="500"');
    }
    show('chipChart', s);
}

drawPrice();
drawWave();
drawFlow();
drawShort();
drawMain();
drawChips();
```
